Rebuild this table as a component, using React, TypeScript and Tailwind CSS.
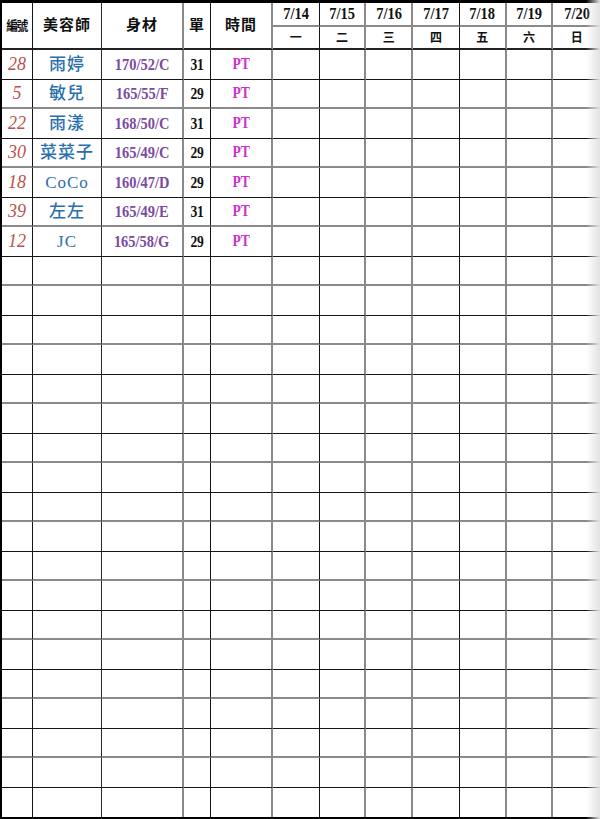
import React from "react";

const serif = { fontFamily: '"Liberation Serif", "Noto Sans CJK TC", serif' };

const colRight = [
  "border-r border-r-[#151515]",
  "border-r border-r-[#2a2a2a]",
  "border-r-2 border-r-[#8a8a8a]",
  "border-r border-r-[#151515]",
  "border-r-2 border-r-[#8a8a8a]",
  "border-r border-r-[#151515]",
  "border-r-2 border-r-[#8a8a8a]",
  "border-r-2 border-r-[#8a8a8a]",
  "border-r border-r-[#151515]",
  "border-r-2 border-r-[#8a8a8a]",
  "border-r-2 border-r-[#8a8a8a]",
  "border-r-0",
];

const data = [
  ["28", "雨婷", "170/52/C", "31", "PT"],
  ["5", "敏兒", "165/55/F", "29", "PT"],
  ["22", "雨漾", "168/50/C", "31", "PT"],
  ["30", "菜菜子", "165/49/C", "29", "PT"],
  ["18", "CoCo", "160/47/D", "29", "PT"],
  ["39", "左左", "165/49/E", "31", "PT"],
  ["12", "JC", "165/58/G", "29", "PT"],
];

const dates = ["7/14", "7/15", "7/16", "7/17", "7/18", "7/19", "7/20"];
const days = ["一", "二", "三", "四", "五", "六", "日"];
const heads = ["編號", "美容師", "身材", "單", "時間"];

export default function App() {
  const rows = Array.from({ length: 26 }, (_, i) => i);
  return (
    <div className="relative w-[600px] h-[819px] bg-white overflow-hidden" style={serif}>
      <div className="grid grid-cols-[31px_69px_82px_27px_62px_repeat(7,1fr)] grid-rows-[24px_23px_repeat(26,29.5px)] w-[600px] h-[819px] border-t-[3px] border-t-black border-l-2 border-l-black border-b-2 border-b-black">
        {heads.map((h, c) => (
          <div
            key={h}
            className={`row-span-2 flex items-center justify-center border-b-2 border-b-[#222] ${colRight[c]} font-bold text-[#111]`}
          >
            <span className={c === 0 ? "inline-block text-[13px] tracking-[-1.5px] scale-x-90" : "text-[15px] tracking-[1px]"}>{h}</span>
          </div>
        ))}
        {dates.map((d, i) => (
          <div
            key={d}
            className={`flex items-center justify-center border-b-2 border-b-[#8a8a8a] ${colRight[5 + i]} font-bold text-[#111]`}
          >
            <span className="inline-block text-[17px] scale-x-[0.85]">{d}</span>
          </div>
        ))}
        {days.map((d, i) => (
          <div
            key={d}
            className={`flex items-center justify-center border-b-2 border-b-[#222] ${colRight[5 + i]} font-bold text-[12px] text-[#111]`}
          >
            {d}
          </div>
        ))}
        {rows.map((r) => {
          const rec = data[r];
          const bottom =
            r === 25 ? "border-b-0" : r % 2 === 0 ? "border-b border-b-[#151515]" : "border-b-2 border-b-[#8a8a8a]";
          return Array.from({ length: 12 }, (_, c) => {
            let content: React.ReactNode = null;
            if (rec && c < 5) {
              if (c === 0) content = <span className="italic text-[18px] text-[#c0504d]">{rec[0]}</span>;
              if (c === 1) content = <span className="text-[17px] font-medium text-[#2a6fae] tracking-[1px]">{rec[1]}</span>;
              if (c === 2)
                content = (
                  <span className="inline-block font-bold text-[17px] text-[#7b4aa2] scale-x-[0.85]">{rec[2]}</span>
                );
              if (c === 3)
                content = (
                  <span className="inline-block font-bold text-[17px] text-[#111] scale-x-[0.8] tracking-[-0.5px]">{rec[3]}</span>
                );
              if (c === 4)
                content = (
                  <span className="inline-block font-bold text-[16px] text-[#cc33cc] scale-x-[0.85]">{rec[4]}</span>
                );
            }
            return (
              <div key={`${r}-${c}`} className={`flex items-center justify-center ${colRight[c]} ${bottom}`}>
                {content}
              </div>
            );
          });
        })}
      </div>
      <div className="pointer-events-none absolute right-0 top-0 h-full w-[14px] bg-gradient-to-r from-transparent to-[#e2e2e2]" />
    </div>
  );
}
